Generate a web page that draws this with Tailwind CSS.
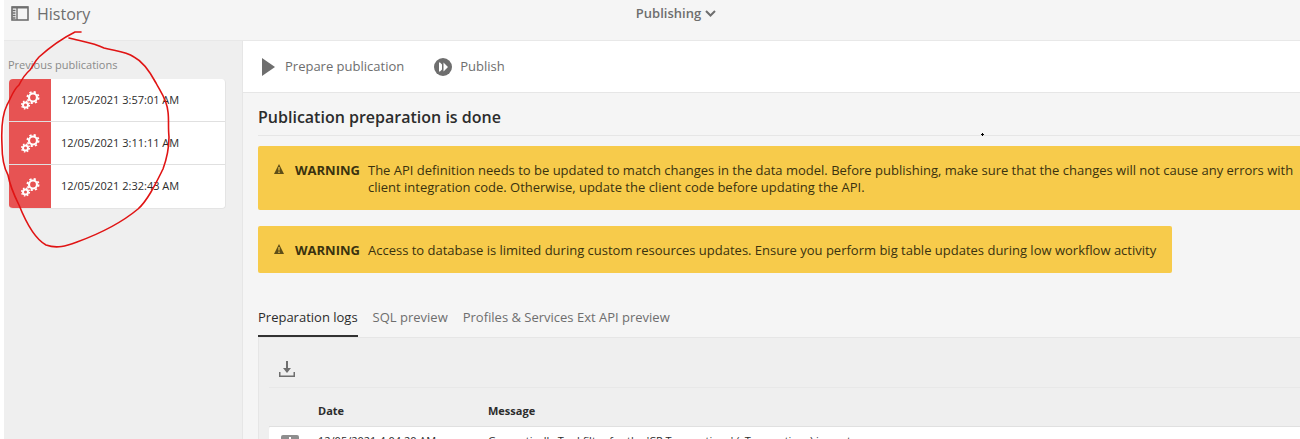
<!DOCTYPE html>
<html lang="en">
<head>
    <meta charset="UTF-8">
    <meta name="viewport" content="width=device-width, initial-scale=1.0">
    <title>Publishing</title>
    <script src="https://cdn.jsdelivr.net/npm/@tailwindcss/browser@4"></script>
</head>
<body class="relative flex h-screen flex-col overflow-hidden bg-white pl-1 font-['Open_Sans','Noto_Sans',sans-serif] text-[#2c2c2c]">
    <!-- Gear icon shared by the list rows -->
    <svg class="hidden">
        <symbol id="gears" viewBox="0 0 20 20" fill="none" stroke="#fff">
            <circle cx="13" cy="7.5" r="4" stroke-width="2.2"/>
            <circle cx="13" cy="7.5" r="5.6" stroke-width="1.8" stroke-dasharray="2.2 2.2"/>
            <circle cx="5.5" cy="15" r="2.5" stroke-width="2"/>
            <circle cx="5.5" cy="15" r="3.9" stroke-width="1.4" stroke-dasharray="1.53 1.53"/>
        </symbol>
    </svg>

    <!-- Top bar -->
    <header class="grid h-[41px] shrink-0 grid-cols-[1fr_auto_1fr] items-start border-b border-[#e8e8e8] bg-[#f5f5f5]">
        <div class="flex h-[27px] items-center gap-2 pl-[7px]">
            <svg class="h-[15px] w-[18px]" viewBox="0 0 18 15" fill="none" aria-hidden="true">
                <rect x="1" y="1" width="16" height="13" stroke="#6e6e6e" stroke-width="1.6"/>
                <path d="M1 1.5h16" stroke="#6e6e6e" stroke-width="2"/>
                <path d="M6 1v13" stroke="#6e6e6e" stroke-width="1.4"/>
                <path d="M1.5 4.5h3M1.5 7h3M1.5 9.5h3M1.5 12h3" stroke="#6e6e6e" stroke-width="1.3"/>
            </svg>
            <h2 class="text-base text-[#6e6e6e]">History</h2>
        </div>
        <button type="button" class="ml-12 flex h-[27px] items-center gap-1 text-[13px] font-semibold text-[#6e6e6e]">
            Publishing
            <svg class="h-[7px] w-[11px]" viewBox="0 0 11 7" fill="none" aria-hidden="true">
                <path d="M1 1l4.5 4.500L10 1" stroke="#6e6e6e" stroke-width="2"/>
            </svg>
        </button>
    </header>

    <div class="flex min-h-0 flex-1">
        <!-- Previous publications -->
        <aside class="w-[239px] shrink-0 border-r border-[#e6e6e6] bg-[#efefef] pt-[15px] pr-4 pl-1">
            <h3 class="text-[11px] leading-[18px] text-[#8a8a8a]">Previous publications</h3>
            <ul class="mt-[5px] ml-px divide-y divide-[#e0e0e0] overflow-hidden rounded-sm border-r border-b border-[#e4e4e4] bg-white text-[11px]">
                <li class="flex h-[43px] items-center gap-[10px]">
                    <span class="flex h-full w-[42px] items-center justify-center bg-[#e75353]">
                        <svg class="size-5" aria-hidden="true"><use href="#gears"/></svg>
                    </span>
                    <a href="#">12/05/2021 3:57:01 AM</a>
                </li>
                <li class="flex h-[43px] items-center gap-[10px]">
                    <span class="flex h-full w-[42px] items-center justify-center bg-[#e75353]">
                        <svg class="size-5" aria-hidden="true"><use href="#gears"/></svg>
                    </span>
                    <a href="#">12/05/2021 3:11:11 AM</a>
                </li>
                <li class="flex h-[43px] items-center gap-[10px]">
                    <span class="flex h-full w-[42px] items-center justify-center bg-[#e75353]">
                        <svg class="size-5" aria-hidden="true"><use href="#gears"/></svg>
                    </span>
                    <a href="#">12/05/2021 2:32:43 AM</a>
                </li>
            </ul>
        </aside>

        <main class="flex min-w-0 flex-1 flex-col bg-[#f5f5f5]">
            <!-- Actions -->
            <div class="flex h-[52px] shrink-0 items-center gap-[30px] border-b border-[#e6e6e6] bg-white pl-[19px] text-[13px] text-[#6e6e6e]">
                <button type="button" class="flex items-center gap-[10px]">
                    <svg class="h-[18px] w-[13px]" viewBox="0 0 13 18" aria-hidden="true">
                        <path d="M0 0l13 9-13 9z" fill="#6e6e6e"/>
                    </svg>
                    Prepare publication
                </button>
                <button type="button" class="flex items-center gap-2">
                    <svg class="size-[18px]" viewBox="0 0 18 18" aria-hidden="true">
                        <circle cx="9" cy="9" r="9" fill="#6e6e6e"/>
                        <path d="M5 4.5h1l2 2v5l-2 2H5zM9.500 4.500L14 9l-4.500 4.500z" fill="#fff"/>
                    </svg>
                    Publish
                </button>
            </div>

            <div class="min-h-0 flex-1 pl-[15px]">
                <h1 class="h-[43px] border-b border-[#e6e6e6] pt-3 text-base leading-6 font-semibold">Publication preparation is done</h1>

                <!-- Warnings -->
                <div class="mt-[10px] flex rounded-l-xs bg-[#f7cb4b] pt-4 pb-[14px] pl-4 text-[13px] leading-[17px] text-[#3a320f]">
                    <svg class="mt-[2px] mr-[11px] size-[10px] shrink-0" viewBox="0 0 10 10" aria-hidden="true">
                        <path d="M5 0l5 10H0z" fill="#5e4e17"/>
                        <path d="M5 3v3.500M5 7.500v1.500" stroke="#f7cb4b" stroke-width="1.2"/>
                    </svg>
                    <strong class="mr-2 font-bold">WARNING</strong>
                    <p>The API definition needs to be updated to match changes in the data model. Before publishing, make sure that the changes will not cause any errors with client integration code. Otherwise, update the client code before updating the API.</p>
                </div>
                <div class="mt-4 flex w-fit rounded-xs bg-[#f7cb4b] px-4 pt-4 pb-[14px] text-[13px] leading-[17px] text-[#3a320f]">
                    <svg class="mt-[2px] mr-[11px] size-[10px] shrink-0" viewBox="0 0 10 10" aria-hidden="true">
                        <path d="M5 0l5 10H0z" fill="#5e4e17"/>
                        <path d="M5 3v3.500M5 7.500v1.500" stroke="#f7cb4b" stroke-width="1.2"/>
                    </svg>
                    <strong class="mr-2 font-bold">WARNING</strong>
                    <p>Access to database is limited during custom resources updates. Ensure you perform big table updates during low workflow activity</p>
                </div>

                <!-- Tabs -->
                <nav class="mt-6 flex h-10 gap-[15px] text-[13px] leading-10 text-[#6e6e6e]">
                    <a href="#" class="border-b-2 border-[#323232] text-[#2c2c2c]">Preparation logs</a>
                    <a href="#">SQL preview</a>
                    <a href="#">Profiles &amp; Services Ext API preview</a>
                </nav>

                <section class="border-t border-l border-[#e6e6e6] bg-[#efefef] pl-[10px]">
                    <div class="flex h-[50px] items-center border-b border-[#e8e8e8] pt-3 pl-[10px]">
                        <button type="button" aria-label="Download">
                            <svg class="size-4" viewBox="0 0 16 16" fill="none" aria-hidden="true">
                                <path d="M.75 11v4.250h14.500V11" stroke="#6e6e6e" stroke-width="1.5"/>
                                <path d="M8 0v8" stroke="#6e6e6e" stroke-width="2"/>
                                <path d="M4 7h8l-4 5z" fill="#6e6e6e"/>
                            </svg>
                        </button>
                    </div>
                    <table class="w-full table-fixed text-left text-[11px]">
                        <thead>
                            <tr class="h-[38px]">
                                <th class="w-[49px]"></th>
                                <th class="w-[170px] pt-2 font-bold">Date</th>
                                <th class="pt-2 font-bold">Message</th>
                            </tr>
                        </thead>
                        <tbody class="bg-white">
                            <tr class="align-top">
                                <td class="rounded-tl-sm border-t border-[#e0e0e0] pt-2 pl-3">
                                    <svg class="size-[18px]" viewBox="0 0 18 18" aria-hidden="true">
                                        <rect width="18" height="18" rx="2" fill="#8e8e8e"/>
                                        <path d="M8 2h2v8H8z" fill="#fff"/>
                                    </svg>
                                </td>
                                <td class="border-t border-[#e0e0e0] pt-[6px]">12/05/2021 4:04:20 AM</td>
                                <td class="border-t border-[#e0e0e0] pt-[6px]">Generatically Tool filter for the 'CP Transactions' (cTransactions) import</td>
                            </tr>
                        </tbody>
                    </table>
                </section>
            </div>
        </main>
    </div>

    <!-- Hand-drawn circle around the list -->
    <svg class="pointer-events-none absolute top-0 left-0 h-[260px] w-[200px]" viewBox="0 0 200 260" fill="none" aria-hidden="true">
        <path d="M81 32H75C65 37 49 48 39 57C35 61 33 66 30 70C24 75 22 79 19 85C13 90 11 98 7 105C3 113 1 126 2 145C2 159 4 168 8 175C10 186 14 195 19 205C25 220 35 239 46 245C57 249 66 246 77 242C99 234 120 224 138 209C148 200 156 183 163 169C167 158 169 146 169 137C168 127 169 119 168 112C167 99 160 91 156 83C149 70 142 61 134 57C125 51 114 51 104 48C94 43 80 41 69 38" stroke="#e01414" stroke-width="1.6" stroke-linecap="round"/>
    </svg>
    <!-- Mouse pointer -->
    <svg class="pointer-events-none absolute top-[133px] left-[981px] size-[3px]" viewBox="0 0 3 3" aria-hidden="true">
        <path d="M1 0h1v1h1v1H2v1H1V2H0V1h1z" fill="#000"/>
    </svg>
</body>
</html>
